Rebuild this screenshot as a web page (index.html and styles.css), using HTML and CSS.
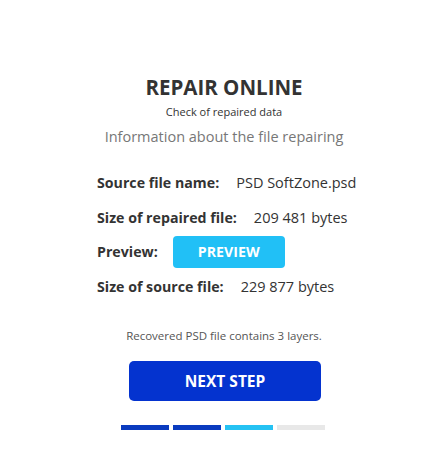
FILE: index.html
```html
<!DOCTYPE html>
<html>
<head>
<meta charset="utf-8">
<link rel="stylesheet" href="styles.css">
</head>
<body>
<div class="page">
  <h1 class="title">REPAIR ONLINE</h1>
  <p class="subtitle">Check of repaired data</p>
  <p class="info">Information about the file repairing</p>
  <div class="rows">
    <div class="row"><span class="label">Source file name:</span><span class="value">PSD SoftZone.psd</span></div>
    <div class="row row-short"><span class="label">Size of repaired file:</span><span class="value">209 481 bytes</span></div>
    <div class="row"><span class="label">Preview:</span><span class="preview">PREVIEW</span></div>
    <div class="row"><span class="label">Size of source file:</span><span class="value">229 877 bytes</span></div>
  </div>
  <p class="note">Recovered PSD file contains 3 layers.</p>
  <div class="next">NEXT STEP</div>
  <div class="progress">
    <span class="seg done"></span><span class="seg done"></span><span class="seg current"></span><span class="seg"></span>
  </div>
</div>
</body>
</html>
```
FILE: styles.css
```css
html, body { margin: 0; padding: 0; background: #fff; }
body { font-family: "Open Sans", sans-serif; color: #333; }
.page { display: flex; flex-direction: column; align-items: center; padding-top: 73px; }
.title { margin: 0; font-size: 20.5px; font-weight: 700; line-height: 28px; color: #333; }
.subtitle { margin: 3px 0 0; font-size: 11px; line-height: 16px; color: #333; }
.info { margin: 7px 0 0; font-size: 14.5px; line-height: 20px; color: #777; }
.rows { align-self: flex-start; margin-left: 97px; margin-top: 18px; display: flex; flex-direction: column; }
.row { display: flex; align-items: center; height: 35px; font-size: 14.2px; }
.row-short { height: 34px; }
.label { font-weight: 700; margin-right: 17px; }
.value { font-size: 14.5px; }
.preview { display: flex; align-items: center; justify-content: center; width: 112px; height: 32px; margin-left: -2px; background: #21c0f6; color: #fff; border-radius: 4px; font-weight: 700; font-size: 14.2px; }
.note { margin: 24px 0 0; font-size: 11.5px; color: #555; line-height: 16px; }
.next { margin-top: 17px; margin-left: 2px; width: 192px; height: 40px; border-radius: 5px; background: #0433cf; color: #fff; font-weight: 700; font-size: 15.5px; display: flex; align-items: center; justify-content: center; }
.progress { margin-top: 24px; display: flex; gap: 4px; margin-left: -2px; }
.seg { width: 48px; height: 5px; background: #e8e8e8; }
.seg.done { background: #0a3bbf; }
.seg.current { background: #25c2f3; }
```
